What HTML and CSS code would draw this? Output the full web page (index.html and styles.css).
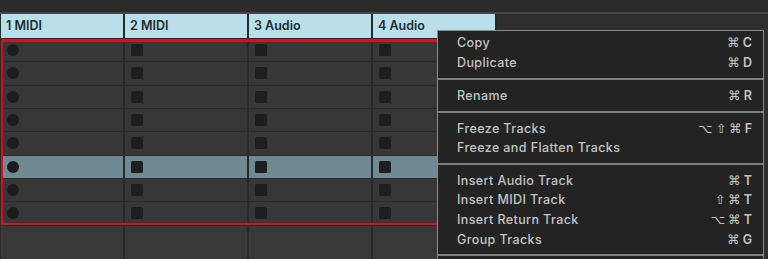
FILE: index.html
```html
<!DOCTYPE html>
<html>
<head>
<meta charset="utf-8">
<link rel="stylesheet" href="styles.css">
</head>
<body>
<div class="app">
  <div class="topbar"></div>
  <div class="session">
    <div class="track">
      <div class="track-head">1 MIDI</div>
      <div class="slots">
        <div class="slot"><span class="rec"></span></div>
        <div class="slot"><span class="rec"></span></div>
        <div class="slot"><span class="rec"></span></div>
        <div class="slot"><span class="rec"></span></div>
        <div class="slot"><span class="rec"></span></div>
        <div class="slot sel"><span class="rec"></span></div>
        <div class="slot"><span class="rec"></span></div>
        <div class="slot"><span class="rec"></span></div>
      </div>
      <div class="slot-empty"></div>
    </div>
    <div class="track">
      <div class="track-head">2 MIDI</div>
      <div class="slots">
        <div class="slot"><span class="stop"></span></div>
        <div class="slot"><span class="stop"></span></div>
        <div class="slot"><span class="stop"></span></div>
        <div class="slot"><span class="stop"></span></div>
        <div class="slot"><span class="stop"></span></div>
        <div class="slot sel"><span class="stop"></span></div>
        <div class="slot"><span class="stop"></span></div>
        <div class="slot"><span class="stop"></span></div>
      </div>
      <div class="slot-empty"></div>
    </div>
    <div class="track">
      <div class="track-head">3 Audio</div>
      <div class="slots">
        <div class="slot"><span class="stop"></span></div>
        <div class="slot"><span class="stop"></span></div>
        <div class="slot"><span class="stop"></span></div>
        <div class="slot"><span class="stop"></span></div>
        <div class="slot"><span class="stop"></span></div>
        <div class="slot sel"><span class="stop"></span></div>
        <div class="slot"><span class="stop"></span></div>
        <div class="slot"><span class="stop"></span></div>
      </div>
      <div class="slot-empty"></div>
    </div>
    <div class="track">
      <div class="track-head">4 Audio</div>
      <div class="slots">
        <div class="slot"><span class="stop"></span></div>
        <div class="slot"><span class="stop"></span></div>
        <div class="slot"><span class="stop"></span></div>
        <div class="slot"><span class="stop"></span></div>
        <div class="slot"><span class="stop"></span></div>
        <div class="slot sel"><span class="stop"></span></div>
        <div class="slot"><span class="stop"></span></div>
        <div class="slot"><span class="stop"></span></div>
      </div>
      <div class="slot-empty"></div>
    </div>
    <div class="track-rest"></div>
    <div class="selection"></div>
  </div>

  <div class="menu">
    <div class="section first">
      <div class="item"><span>Copy</span><span class="key"><span class="sym">⌘</span>C</span></div>
      <div class="item"><span>Duplicate</span><span class="key"><span class="sym">⌘</span>D</span></div>
    </div>
    <div class="section">
      <div class="item"><span>Rename</span><span class="key"><span class="sym">⌘</span>R</span></div>
    </div>
    <div class="section">
      <div class="item"><span>Freeze Tracks</span><span class="key"><span class="sym">⌥</span><span class="sym">⇧</span><span class="sym">⌘</span>F</span></div>
      <div class="item"><span>Freeze and Flatten Tracks</span></div>
    </div>
    <div class="section">
      <div class="item"><span>Insert Audio Track</span><span class="key"><span class="sym">⌘</span>T</span></div>
      <div class="item"><span>Insert MIDI Track</span><span class="key"><span class="sym">⇧</span><span class="sym">⌘</span>T</span></div>
      <div class="item"><span>Insert Return Track</span><span class="key"><span class="sym">⌥</span><span class="sym">⌘</span>T</span></div>
      <div class="item"><span>Group Tracks</span><span class="key"><span class="sym">⌘</span>G</span></div>
    </div>
    <div class="section"></div>
  </div>
</div>
</body>
</html>
```

FILE: styles.css
```css
html, body {
  margin: 0;
  padding: 0;
  background: #2a2a2a;
}

.app {
  position: relative;
  width: 768px;
  height: 259px;
  overflow: hidden;
  font-family: Inter, "Open Sans", sans-serif;
}

.topbar {
  height: 12px;
  background: #2a2a2a;
  border-bottom: 2px solid #474747;
}

.session {
  position: relative;
  display: flex;
  gap: 2px;
  padding-left: 1px;
  background: #292929;
  height: 245px;
}

.track {
  width: 122px;
  display: flex;
  flex-direction: column;
}

.track-head {
  height: 24px;
  margin-bottom: 1px;
  background: #b9dfeb;
  color: #1e2a30;
  font-size: 12.5px;
  font-weight: 600;
  line-height: 24px;
  padding-left: 5px;
  box-sizing: border-box;
}

.slots {
  display: flex;
  flex-direction: column;
}

.slot {
  height: 22.33px;
  border-bottom: 1px solid #2a2a2a;
  background: #373737;
  display: flex;
  align-items: center;
  padding-left: 6px;
}

.slot.sel {
  background: #6f8a92;
}

.stop {
  width: 12px;
  height: 12px;
  border-radius: 1.5px;
  background: #1e1e1e;
}

.rec {
  width: 12px;
  height: 12px;
  border-radius: 50%;
  background: #1c1c1c;
}

.slot-empty {
  flex: 1;
  background: #383838;
}

.track-rest {
  flex: 1;
  background: #2e2e2e;
}

.selection {
  position: absolute;
  left: 1px;
  top: 25px;
  width: 520px;
  height: 186px;
  box-sizing: border-box;
  border: 2px solid #d4121c;
  border-top-width: 3px;
  pointer-events: none;
}

.menu {
  position: absolute;
  left: 437px;
  top: 30px;
  width: 327px;
  height: 240px;
  box-sizing: border-box;
  background: #232323;
  border: 1px solid #8a8a8a;
  color: #c4c4c4;
  font-size: 12.5px;
  font-weight: 500;
  letter-spacing: 0.4px;
}

.section {
  padding: 5.5px 0 5.5px 0;
  border-bottom: 2px solid #7e7e7e;
}

.section.first {
  padding-top: 2px;
  padding-bottom: 6px;
}

.section:last-child {
  border-bottom: none;
}

.item {
  height: 19.6px;
  display: flex;
  align-items: center;
  justify-content: space-between;
  padding: 0 11px 0 19px;
}

.key {
  display: flex;
  align-items: center;
  gap: 3px;
  font-weight: 600;
  letter-spacing: 0;
}

.sym {
  font-family: "DejaVu Sans", sans-serif;
  font-size: 12.5px;
  font-weight: normal;
}
```
